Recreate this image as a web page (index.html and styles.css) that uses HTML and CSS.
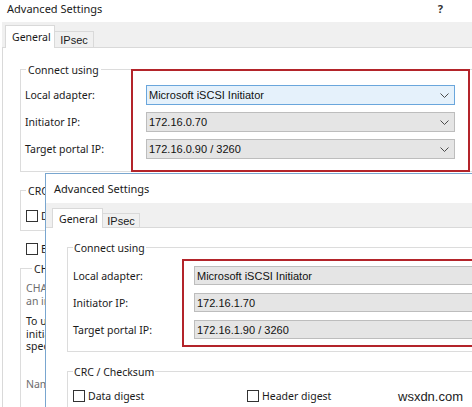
FILE: index.html
```html
<!DOCTYPE html>
<html>
<head>
<meta charset="utf-8">
<link rel="stylesheet" href="styles.css">
</head>
<body>
<div class="screen">
  <div class="dlg back">
    <div class="titlebar"><span class="title">Advanced Settings</span><span class="help">?</span></div>
    <div class="tabs">
      <div class="tab active">General</div>
      <div class="tab ipsec">IPsec</div>
    </div>
    <div class="panel">
      <div class="group connect">
        <div class="legend">Connect using</div>
        <div class="rows">
          <div class="row"><span class="lbl">Local adapter:</span>
            <div class="combo focus"><span class="val">Microsoft iSCSI Initiator</span><svg class="chev" width="9" height="5" viewBox="0 0 9 5"><path d="M0.5 0.5 L4.5 4.5 L8.5 0.5" fill="none" stroke="#4a4a4a" stroke-width="1"/></svg></div></div>
          <div class="row"><span class="lbl">Initiator IP:</span>
            <div class="combo"><span class="val">172.16.0.70</span><svg class="chev" width="9" height="5" viewBox="0 0 9 5"><path d="M0.5 0.5 L4.5 4.5 L8.5 0.5" fill="none" stroke="#4a4a4a" stroke-width="1"/></svg></div></div>
          <div class="row"><span class="lbl">Target portal IP:</span>
            <div class="combo"><span class="val">172.16.0.90 / 3260</span><svg class="chev" width="9" height="5" viewBox="0 0 9 5"><path d="M0.5 0.5 L4.5 4.5 L8.5 0.5" fill="none" stroke="#4a4a4a" stroke-width="1"/></svg></div></div>
        </div>
        <div class="redbox"></div>
      </div>
      <div class="lower">
        <div class="group crc">
          <div class="legend">CRC</div>
          <div class="checks">
            <div class="check"><span class="box"></span><span>D</span></div>
          </div>
        </div>
        <div class="check solo"><span class="box"></span><span>E</span></div>
        <div class="group chap">
          <div class="legend">CH</div>
          <p class="note">CHA<br>an in</p>
          <p class="txt">To u<br>initia<br>spec</p>
          <p class="note name">Nam</p>
        </div>
      </div>
    </div>
  </div>

  <div class="dlg front">
    <div class="titlebar"><span class="title">Advanced Settings</span></div>
    <div class="tabs">
      <div class="tab active">General</div>
      <div class="tab ipsec">IPsec</div>
    </div>
    <div class="panel">
      <div class="group connect">
        <div class="legend">Connect using</div>
        <div class="rows">
          <div class="row"><span class="lbl">Local adapter:</span>
            <div class="combo"><span class="val">Microsoft iSCSI Initiator</span></div></div>
          <div class="row"><span class="lbl">Initiator IP:</span>
            <div class="combo"><span class="val">172.16.1.70</span></div></div>
          <div class="row"><span class="lbl">Target portal IP:</span>
            <div class="combo"><span class="val">172.16.1.90 / 3260</span></div></div>
        </div>
        <div class="redbox"></div>
      </div>
      <div class="group crc">
        <div class="legend">CRC / Checksum</div>
        <div class="checks">
          <div class="check first"><span class="box"></span><span>Data digest</span></div>
          <div class="check"><span class="box"></span><span>Header digest</span></div>
        </div>
      </div>
    </div>
  </div>

  <div class="watermark">wsxdn.com</div>
</div>
</body>
</html>
```

FILE: styles.css
```css
html, body {
  margin: 0;
  padding: 0;
  background: #fff;
}
body {
  font-family: "Noto Sans", "Open Sans", sans-serif;
  font-size: 10.5px;
  color: #1a1a1a;
}
.screen {
  position: relative;
  width: 472px;
  height: 407px;
  overflow: hidden;
  background: #fff;
}
.dlg {
  background: #fff;
  box-sizing: border-box;
}
.back {
  width: 472px;
  height: 407px;
}
.front {
  position: absolute;
  left: 45px;
  top: 173px;
  width: 460px;
  height: 250px;
  border: 1px solid #79a6cf;
}

/* title bar */
.titlebar {
  display: flex;
  align-items: center;
  justify-content: space-between;
}
.title {
  font-size: 11px;
}
.back .titlebar {
  height: 22px;
  padding: 0 29px 6px 7px;
  box-sizing: border-box;
}
.help {
  font-size: 11px;
  font-weight: bold;
  color: #333;
}
.front .titlebar {
  height: 29px;
  padding-left: 8px;
}

/* tabs */
.tabs {
  display: flex;
  align-items: flex-end;
  background: #f0f0f0;
  border-bottom: 1px solid #d9d9d9;
}
.tab {
  box-sizing: border-box;
  border: 1px solid #d9d9d9;
  border-bottom: none;
  background: #f0f0f0;
  display: flex;
  align-items: center;
  justify-content: center;
}
.tab.active {
  background: #fff;
  margin-bottom: -1px;
  justify-content: flex-start;
  padding-left: 6px;
}
.tab.ipsec {
  font-family: "Liberation Sans", Arial, sans-serif;
  font-size: 11px;
  border-left: none;
}
.back .tabs {
  margin-left: 2px;
  height: 26px;
  box-sizing: border-box;
  padding-left: 3px;
}
.back .tab.active { width: 50px; height: 23px; }
.back .tab.ipsec { width: 39px; height: 16px; }
.front .tabs {
  height: 25px;
  box-sizing: border-box;
  padding-left: 6px;
}
.front .tab.active { width: 51px; height: 20px; }
.front .tab.ipsec { width: 37px; height: 14px; }

/* panel */
.back .panel {
  margin-left: 2px;
  border-left: 1px solid #d9d9d9;
  padding: 21px 0 0 17px;
}
.front .panel {
  padding: 19px 0 0 21px;
}

/* group boxes */
.group {
  position: relative;
  border: 1px solid #dcdcdc;
  border-right: none;
  padding-left: 4px;
}
.legend {
  width: fit-content;
  height: 16px;
  line-height: 16px;
  margin: -8px 0 0 1px;
  padding: 0 2px;
  background: #fff;
  white-space: nowrap;
}
.rows {
  display: flex;
  flex-direction: column;
}
.row {
  display: flex;
  align-items: center;
}
.lbl {
  width: 121px;
  flex: none;
}
.combo {
  flex: none;
  box-sizing: border-box;
  display: flex;
  align-items: center;
  justify-content: space-between;
  background: #e5e5e5;
  border: 1px solid #bdbdbd;
  font-family: "Liberation Sans", Arial, sans-serif;
  font-size: 11px;
  color: #111;
  padding: 0 5px 0 2px;
  white-space: nowrap;
}
.combo.focus {
  background: #e5f1fb;
  border-color: #6aa6dc;
}
.redbox {
  position: absolute;
  box-sizing: border-box;
  border: 2px solid #b3242a;
}

.back .connect .rows {
  gap: 7px;
  padding: 7px 0 12px;
}
.back .connect .row { height: 20px; }
.back .connect .combo { width: 309px; height: 20px; }
.back .connect .redbox {
  left: 110px;
  top: -1px;
  width: 339px;
  height: 103px;
}

.front .group { padding-left: 5px; }
.front .legend { margin-left: 0; padding: 0 1px; }
.front .connect .rows {
  gap: 8px;
  padding: 10px 0 12px;
}
.front .connect .row { height: 19px; }
.front .connect .combo { width: 320px; height: 19px; }
.front .connect .redbox {
  left: 114px;
  top: 11px;
  width: 340px;
  height: 88px;
}

/* checkboxes */
.checks {
  display: flex;
  align-items: center;
}
.check {
  display: flex;
  align-items: center;
  gap: 3px;
  height: 12px;
  white-space: nowrap;
}
.check.first { width: 174px; }
.box {
  box-sizing: border-box;
  width: 12px;
  height: 12px;
  border: 1px solid #333;
  background: #fff;
  flex: none;
}

/* back dialog, lower part (covered by the front dialog beyond x=45) */
.back .lower {
  padding-top: 18px;
}
.back .crc .checks {
  padding: 11px 0 8px 1px;
}
.back .check.solo {
  margin: 12px 0 0 6px;
}
.back .chap {
  margin-top: 13px;
  padding-left: 5px;
  height: 200px;
}
.back .chap .legend { margin-left: 6px; }
.chap p {
  margin: 0;
  white-space: nowrap;
  line-height: 13px;
}
.chap .note { color: #6d6d6d; margin-top: 5px; }
.chap .txt { margin-top: 7px; line-height: 12.5px; }
.chap .note.name { margin-top: 25px; }

.front .crc {
  margin-top: 19px;
}
.front .crc .checks {
  padding: 10px 0 8px 0;
}

.watermark {
  position: absolute;
  left: 398px;
  top: 389px;
  font-family: "Liberation Sans", Arial, sans-serif;
  font-size: 13px;
  color: #222;
}
```
